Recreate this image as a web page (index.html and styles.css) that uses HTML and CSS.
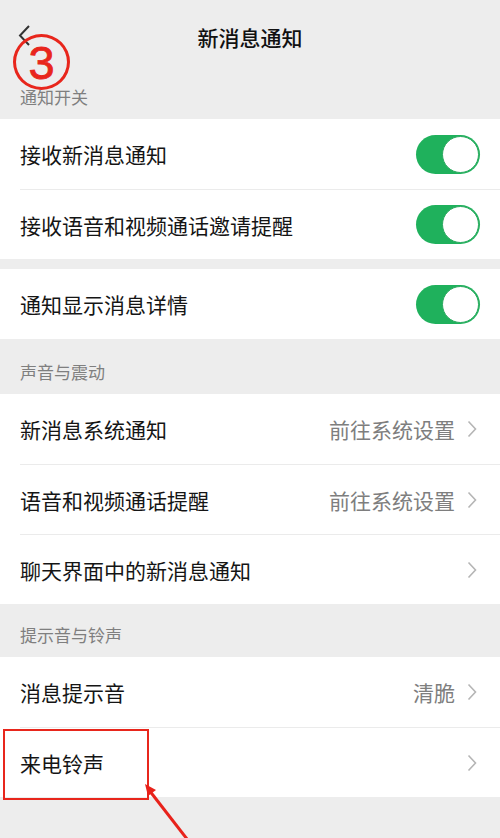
FILE: index.html
```html
<!DOCTYPE html>
<html lang="zh-CN">
<head>
<meta charset="utf-8">
<title>新消息通知</title>
<link rel="stylesheet" href="styles.css">
</head>
<body>
<div class="page">
  <header class="nav">
    <svg class="back" width="14" height="22" viewBox="0 0 14 22"><path d="M11 1 L2 10.5 L11 20" fill="none" stroke="#333" stroke-width="2"/></svg>
    <div class="title">新消息通知</div>
  </header>

  <div class="label first">通知开关</div>
  <section class="group">
    <div class="row"><span class="text">接收新消息通知</span><span class="switch"><span class="knob"></span></span></div>
    <div class="row"><span class="text">接收语音和视频通话邀请提醒</span><span class="switch"><span class="knob"></span></span></div>
  </section>
  <div class="gap"></div>
  <section class="group">
    <div class="row"><span class="text">通知显示消息详情</span><span class="switch"><span class="knob"></span></span></div>
  </section>

  <div class="label">声音与震动</div>
  <section class="group">
    <div class="row"><span class="text">新消息系统通知</span><span class="right"><span class="value">前往系统设置</span><svg class="chev" width="10" height="18" viewBox="0 0 10 18"><path d="M1.5 1.5 L8.5 9 L1.5 16.5" fill="none" stroke="#b5b5b5" stroke-width="1.6"/></svg></span></div>
    <div class="row"><span class="text">语音和视频通话提醒</span><span class="right"><span class="value">前往系统设置</span><svg class="chev" width="10" height="18" viewBox="0 0 10 18"><path d="M1.5 1.5 L8.5 9 L1.5 16.5" fill="none" stroke="#b5b5b5" stroke-width="1.6"/></svg></span></div>
    <div class="row"><span class="text">聊天界面中的新消息通知</span><span class="right"><svg class="chev" width="10" height="18" viewBox="0 0 10 18"><path d="M1.5 1.5 L8.5 9 L1.5 16.5" fill="none" stroke="#b5b5b5" stroke-width="1.6"/></svg></span></div>
  </section>

  <div class="label last">提示音与铃声</div>
  <section class="group">
    <div class="row"><span class="text">消息提示音</span><span class="right"><span class="value">清脆</span><svg class="chev" width="10" height="18" viewBox="0 0 10 18"><path d="M1.5 1.5 L8.5 9 L1.5 16.5" fill="none" stroke="#b5b5b5" stroke-width="1.6"/></svg></span></div>
    <div class="row"><span class="text">来电铃声</span><span class="right"><svg class="chev" width="10" height="18" viewBox="0 0 10 18"><path d="M1.5 1.5 L8.5 9 L1.5 16.5" fill="none" stroke="#b5b5b5" stroke-width="1.6"/></svg></span></div>
  </section>

  <div class="badge">3</div>
  <div class="highlight"></div>
  <svg class="arrow" width="60" height="60" viewBox="0 0 60 60">
    <path d="M44 58 L6 9" stroke="#e8221b" stroke-width="3" fill="none"/>
    <path d="M2 3 L13 9 L5 15 Z" fill="#e8221b"/>
  </svg>
</div>
</body>
</html>
```

FILE: styles.css
```css
* { box-sizing: border-box; }
html, body { margin: 0; padding: 0; }
body {
  background: #ededed;
  font-family: "Noto Sans CJK SC", "Noto Sans", sans-serif;
  color: #111;
}
.page {
  position: relative;
  width: 500px;
  height: 838px;
  overflow: hidden;
  background: #ededed;
}
.nav {
  position: relative;
  height: 74px;
  display: flex;
  align-items: center;
  justify-content: center;
}
.back {
  position: absolute;
  left: 18px;
  top: 25px;
}
.title {
  font-size: 21px;
  font-weight: 500;
  color: #111;
  line-height: 28px;
}
.label {
  font-size: 17px;
  color: #7f7f7f;
  line-height: 24px;
  padding: 21px 20px 10px;
}
.label.first { padding-top: 11px; }
.label.last { padding-top: 19px; }
.group { background: #fff; }
.gap { height: 10px; }
.row {
  height: 70px;
  margin-left: 20px;
  padding-right: 20px;
  display: flex;
  align-items: center;
  justify-content: space-between;
  border-top: 1px solid #ebebeb;
}
.row:first-child { border-top: none; }
.text {
  font-size: 21px;
  line-height: 28px;
  color: #151515;
}
.right {
  display: flex;
  align-items: center;
  gap: 12px;
  padding-right: 3px;
}
.value {
  font-size: 21px;
  line-height: 28px;
  color: #7e7e7e;
}
.chev { display: block; }
.switch {
  width: 64px;
  height: 39px;
  border-radius: 20px;
  background: #1fb15c;
  display: flex;
  align-items: center;
  justify-content: flex-end;
  padding: 0 1px;
}
.knob {
  width: 37px;
  height: 37px;
  border-radius: 50%;
  background: #fff;
  border: 1px solid #2aa95e;
}
.badge {
  position: absolute;
  left: 13px;
  top: 34px;
  width: 57px;
  height: 56px;
  border: 3px solid #e8261c;
  border-radius: 50%;
  color: #e8261c;
  font-family: "Liberation Sans", Arial, sans-serif;
  font-size: 47px;
  line-height: 52px;
  text-align: center;
  -webkit-text-stroke: 0.8px #e8261c;
}
.highlight {
  position: absolute;
  left: 3px;
  top: 729px;
  width: 146px;
  height: 71px;
  border: 2px solid #e8261c;
}
.arrow {
  position: absolute;
  left: 143px;
  top: 781px;
}
```
